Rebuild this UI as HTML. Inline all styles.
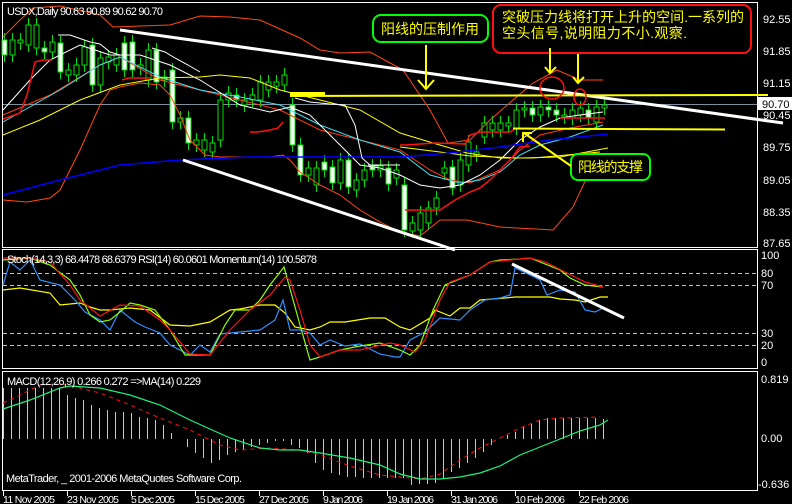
<!DOCTYPE html>
<html><head><meta charset="utf-8">
<style>
html,body{margin:0;padding:0;background:#000;width:792px;height:504px;overflow:hidden}
svg{display:block}
text{font-family:"Liberation Sans",sans-serif;font-size:11px;fill:#fff}
.d{font-size:10.5px}
.cj{font-family:"Liberation Sans","Noto Sans CJK SC",sans-serif;font-size:14px;fill:#ffff00}
</style></head><body>
<svg id="s" width="792" height="504" viewBox="0 0 792 504" xmlns="http://www.w3.org/2000/svg">
<rect width="792" height="504" fill="#000"/>
<g fill="none" stroke="#fff" stroke-width="1">
<rect x="2.5" y="2.5" width="755" height="245"/>
<rect x="2.5" y="249.5" width="755" height="119"/>
<rect x="2.5" y="371.5" width="755" height="119"/>
</g>
<line x1="3" y1="104.5" x2="757" y2="104.5" stroke="#8090a0"/>
<g id="main"></g>
<polyline fill="none" stroke="#ff4a10" points="3,37 20,20 33,8 60,6 100,15 113,27 140,26 170,25 200,16 230,17 260,20 300,38 320,50 340,53 370,52 403,70 430,110 448,143 470,140 490,120 513,100 533,83 557,70 580,80 603,80"/>
<polyline fill="none" stroke="#ff4a10" points="3,200 27,202 50,198 60,190 80,150 100,105 110,90 120,87 140,83 160,85 170,95 180,115 190,140 205,155 220,157 250,157 270,157 283,155 290,160 300,172 320,185 340,195 360,210 380,222 400,232 420,236 440,220 467,220 500,227 553,230 573,207 587,177 603,165"/>
<polyline fill="none" stroke="#ff3a10" points="3,115 50,95 100,65 120,57 160,80 200,90 240,100 280,110 320,130 360,140 400,150 430,170 450,180 470,183 500,170 520,150 540,135 570,128 603,122"/>
<polyline fill="none" stroke="#40e0f0" points="3,122 60,90 100,65 120,57 160,77 200,90 240,97 280,105 320,125 360,140 400,152 430,175 460,183 480,180 500,172 520,155 540,145 570,137 603,125"/>
<polyline fill="none" stroke="#fff" points="3,110 30,80 50,60 80,45 110,55 140,55 170,65 200,80 240,105 270,112 290,107 310,115 340,145 360,165 380,168 400,175 420,185 440,188 460,185 480,175 500,160 520,140 540,127 560,118 580,115 603,112"/>
<polyline fill="none" stroke="#ffff00" points="3,135 40,120 80,100 120,85 160,78 200,77 220,75 250,78 280,90 320,100 360,110 400,133 433,143 467,153 500,158 533,158 600,152"/>
<polyline fill="none" stroke="#ffff00" points="400,147 440,152 470,156 520,158 560,157 608,148"/>
<polyline fill="none" stroke="#0000ff" stroke-width="1.5" points="3,195 60,180 120,165 180,160 250,157 300,157 350,157 400,157 450,153 500,147 550,140 608,134"/>
<g fill="none" stroke="#ff1010" stroke-width="1.5">
<polyline points="3,119 20,113 27,95 35,62 43,60 52,60"/>
<polyline points="122,80 128,78 150,78"/>
<polyline points="250,132 258,132 270,130 278,128 283,122"/>
<polyline points="405,210 440,210 455,200 470,192 480,188 490,180 500,170 510,160 520,147 530,146"/>
<polyline points="400,145 405,145 435,143 465,144 470,135 480,132 510,132 515,129"/>
<polyline points="560,118 605,118"/>
</g>
<g fill="none" stroke="#fff" stroke-width="1">
<polyline points="58,35 70,35 90,42 100,44 110,52 120,55"/>
<polyline points="152,48 165,52 175,58 188,65 200,72"/>
<polyline points="295,98 310,102 330,104 345,105 355,125 362,158 370,165 378,166"/>
<polyline points="368,165 385,165 400,165"/>
</g>
<line x1="120" y1="30" x2="783" y2="123" stroke="#fff" stroke-width="3"/>
<line x1="183" y1="160" x2="455" y2="250" stroke="#fff" stroke-width="3"/>
<line x1="290" y1="96" x2="768" y2="95" stroke="#ffff00" stroke-width="2"/>
<line x1="290" y1="94" x2="325" y2="94" stroke="#ffff00" stroke-width="4"/>
<line x1="513" y1="128.5" x2="725" y2="129.5" stroke="#ffff00" stroke-width="2"/>
<rect x="373" y="15" width="115" height="27" rx="8" fill="#000" stroke="#00ff00" stroke-width="2"/>
<text class="cj" x="381" y="34" textLength="98">阳线的压制作用</text>
<rect x="493" y="5" width="258" height="48" rx="8" fill="#000" stroke="#ff1010" stroke-width="2"/>
<text class="cj" x="502" y="22" textLength="242">突破压力线将打开上升的空间.一系列的</text>
<text class="cj" x="502" y="38" textLength="185">空头信号,说明阻力不小.观察.</text>
<rect x="571" y="154" width="79" height="26" rx="7" fill="#000" stroke="#00ff00" stroke-width="2"/>
<text class="cj" x="578" y="172" textLength="65">阳线的支撑</text>
<g stroke="#ffff00" stroke-width="2" fill="none">
<line x1="426" y1="45" x2="426" y2="88"/><polyline points="418,80 426,89 434,80"/>
<line x1="550" y1="48" x2="550" y2="72"/><polyline points="545,67 550,73 556,67"/>
<line x1="578" y1="54" x2="578" y2="82"/><polyline points="573,77 578,83 584,77"/>
<line x1="571" y1="166" x2="524" y2="133"/><polyline points="523,142 523,133 532,133"/>
</g>
<g stroke="#ff1010" stroke-width="1.5" fill="none">
<ellipse cx="552" cy="88" rx="12" ry="11"/>
<ellipse cx="580" cy="97" rx="6" ry="8"/>
</g>
<g>
<text x="763" y="23">92.55</text><text x="763" y="55">91.85</text><text x="763" y="87">91.15</text>
<rect x="758" y="97" width="34" height="13" fill="#fff"/><text x="762" y="108" style="fill:#000">90.70</text>
<text x="763" y="119">90.45</text><text x="763" y="151">89.75</text><text x="763" y="184">89.05</text>
<text x="763" y="216">88.35</text><text x="763" y="247">87.65</text>
</g>
<text x="7" y="15" textLength="156">USDX,Daily  90.63 90.89 90.62 90.70</text>
<g stroke="#c0c0c0" stroke-dasharray="4,3">
<line x1="3" y1="273.5" x2="757" y2="273.5"/><line x1="3" y1="285.5" x2="757" y2="285.5"/>
<line x1="3" y1="333.5" x2="757" y2="333.5"/><line x1="3" y1="345.5" x2="757" y2="345.5"/>
</g>
<g fill="none" stroke-width="1.2">
<polyline stroke="#ffff00" points="3,290 20,288 50,293 60,305 80,303 90,307 100,310 110,310 130,308 150,310 170,325 190,326 210,322 230,310 240,309 260,305 275,305 285,313 295,327 310,330 320,327 330,322 345,322 370,318 385,318 400,327 410,330 430,318 435,310 450,316 460,308 470,308 480,300 505,298 515,297 530,297 550,297 560,299 575,300 585,302 600,297 608,297"/>
<polyline stroke="#3090ff" points="3,285 10,262 20,270 30,260 40,280 60,285 75,300 85,312 100,320 110,330 120,310 135,322 145,327 160,333 170,345 190,355 200,345 210,352 220,334 240,332 260,330 275,320 283,300 290,330 300,330 310,333 320,345 330,340 345,346 360,344 380,354 395,357 400,357 410,340 425,332 440,318 460,320 470,310 485,300 500,298 510,295 515,268 530,275 540,280 547,295 560,290 575,292 585,310 595,312 603,308"/>
<polyline stroke="#90ff00" points="3,260 30,258 50,265 70,280 80,295 90,315 100,322 110,320 120,312 130,303 140,305 155,310 170,330 185,355 200,355 210,355 225,325 235,310 250,310 260,300 270,285 284,267 300,325 310,360 320,357 340,350 360,346 380,343 400,350 410,355 420,345 433,310 445,285 465,277 470,275 490,262 500,260 520,259 530,258 560,270 570,278 585,285 603,287"/>
<polyline stroke="#ff1010" points="3,258 30,258 50,262 70,285 80,300 100,316 120,305 140,306 160,320 170,330 190,354 210,355 230,330 250,310 270,295 285,277 290,280 300,310 310,345 320,357 340,350 360,350 390,343 400,345 415,352 425,340 440,300 450,282 470,275 490,262 510,260 530,258 545,262 565,272 585,282 603,287"/>
</g>
<line x1="512" y1="264" x2="624" y2="318" stroke="#fff" stroke-width="3"/>
<text x="7" y="263" textLength="310">Stoch(14,3,3) 68.4478 68.6379  RSI(14) 60.0601  Momentum(14) 100.5878</text>
<text x="761" y="259">100</text><text x="761" y="277">80</text><text x="761" y="289">70</text>
<text x="761" y="337">30</text><text x="761" y="349">20</text><text x="761" y="366">0</text>
<g id="hist" stroke="#c8c8c8" stroke-width="1"></g>
<polyline fill="none" stroke="#ff1010" stroke-dasharray="4,4" points="3,403 20,395 40,385 60,384 80,388 100,393 130,405 160,418 190,430 220,445 240,450 270,448 300,450 320,455 350,466 380,475 400,477 420,479 440,474 460,460 480,448 500,438 520,428 540,420 560,418 600,417"/>
<polyline fill="none" stroke="#20f080" stroke-width="1.2" points="3,409 30,400 60,388 70,386 100,388 130,395 160,405 190,420 230,438 260,448 280,450 300,450 320,453 350,458 380,465 400,474 420,479 440,479 460,477 480,473 500,466 520,455 540,447 560,439 580,431 600,425 608,420"/>
<text x="7" y="385" textLength="194">MACD(12,26,9) 0.266 0.272  =&gt;MA(14) 0.229</text>
<text x="6" y="482" textLength="236">MetaTrader, _ 2001-2006 MetaQuotes Software Corp.</text>
<text x="761" y="383">0.819</text><text x="761" y="442">0.00</text><text x="758" y="488">-0.636</text>
<g stroke="#fff"><line x1="3.5" y1="491" x2="3.5" y2="496"/><line x1="67.5" y1="491" x2="67.5" y2="496"/><line x1="131.5" y1="491" x2="131.5" y2="496"/><line x1="195.5" y1="491" x2="195.5" y2="496"/><line x1="259.5" y1="491" x2="259.5" y2="496"/><line x1="323.5" y1="491" x2="323.5" y2="496"/><line x1="387.5" y1="491" x2="387.5" y2="496"/><line x1="451.5" y1="491" x2="451.5" y2="496"/><line x1="515.5" y1="491" x2="515.5" y2="496"/><line x1="579.5" y1="491" x2="579.5" y2="496"/></g>
<text class="d" x="3" y="503" textLength="52">11 Nov 2005</text><text class="d" x="67" y="503" textLength="52">23 Nov 2005</text><text class="d" x="131" y="503" textLength="44">5 Dec 2005</text><text class="d" x="195" y="503" textLength="50">15 Dec 2005</text><text class="d" x="259" y="503" textLength="50">27 Dec 2005</text><text class="d" x="323" y="503" textLength="40">9 Jan 2006</text><text class="d" x="387" y="503" textLength="47">19 Jan 2006</text><text class="d" x="451" y="503" textLength="47">31 Jan 2006</text><text class="d" x="515" y="503" textLength="50">10 Feb 2006</text><text class="d" x="579" y="503" textLength="50">22 Feb 2006</text>
</svg>
<script>
var C=[[40,55,1],[40,55,0],[40,43,0],[25,45,0],[25,48,0],[48,52,1],[42,52,0],[43,72,1],[70,75,0],[65,75,0],[47,65,0],[45,85,1],[58,85,0],[57,62,0],[55,65,0],[43,70,1],[42,70,1],[65,68,0],[50,80,0],[50,82,1],[77,80,0],[70,122,1],[118,122,0],[118,143,1],[140,145,0],[140,150,0],[143,152,0],[100,140,0],[93,100,0],[95,100,1],[100,105,0],[95,100,0],[82,100,0],[82,90,0],[82,86,0],[75,85,0],[105,145,1],[145,175,1],[168,175,0],[168,185,0],[162,170,1],[167,183,1],[160,183,0],[160,187,1],[180,190,0],[170,180,0],[166,170,1],[166,170,0],[168,184,1],[170,178,0],[185,230,1],[223,231,0],[213,230,0],[208,223,0],[198,208,0],[168,173,0],[167,188,1],[160,185,0],[142,165,0],[152,155,0],[123,137,0],[123,130,0],[123,130,0],[123,126,0],[110,128,0],[108,110,0],[108,115,1],[107,115,0],[107,110,1],[110,115,1],[115,117,0],[110,118,0],[108,115,0],[110,118,1],[107,122,0],[105,108,0]];
var g=document.getElementById("main"),h="";
C.forEach(function(c,i){var x=4+8*i,t=c[0],b=c[1];
h+='<line x1="'+(x+.5)+'" y1="'+(t-7)+'" x2="'+(x+.5)+'" y2="'+(b+7)+'" stroke="#00e000"/>';
h+='<rect x="'+(x-2)+'" y="'+t+'" width="5" height="'+Math.max(2,b-t)+'" fill="'+(c[2]?'#fff':'#000')+'" stroke="#00e000" stroke-width="1"/>';});
g.innerHTML=h;
var H=[388,388,388,388,388,388,388,388,395,398,400,405,408,410,412,412,413,417,418,420,425,433,439,447,453,458,463,460,455,452,450,447,445,443,441,441,445,448,453,463,470,473,475,477,477,478,478,478,478,478,478,485,484,484,483,478,472,468,463,458,452,445,439,435,432,427,423,420,418,418,418,418,418,418,418,419];
var s="";H.forEach(function(v,i){var x=3.5+8*i;s+='<line x1="'+x+'" y1="439" x2="'+x+'" y2="'+v+'"/>';});
document.getElementById("hist").innerHTML=s;
</script>
</body></html>
